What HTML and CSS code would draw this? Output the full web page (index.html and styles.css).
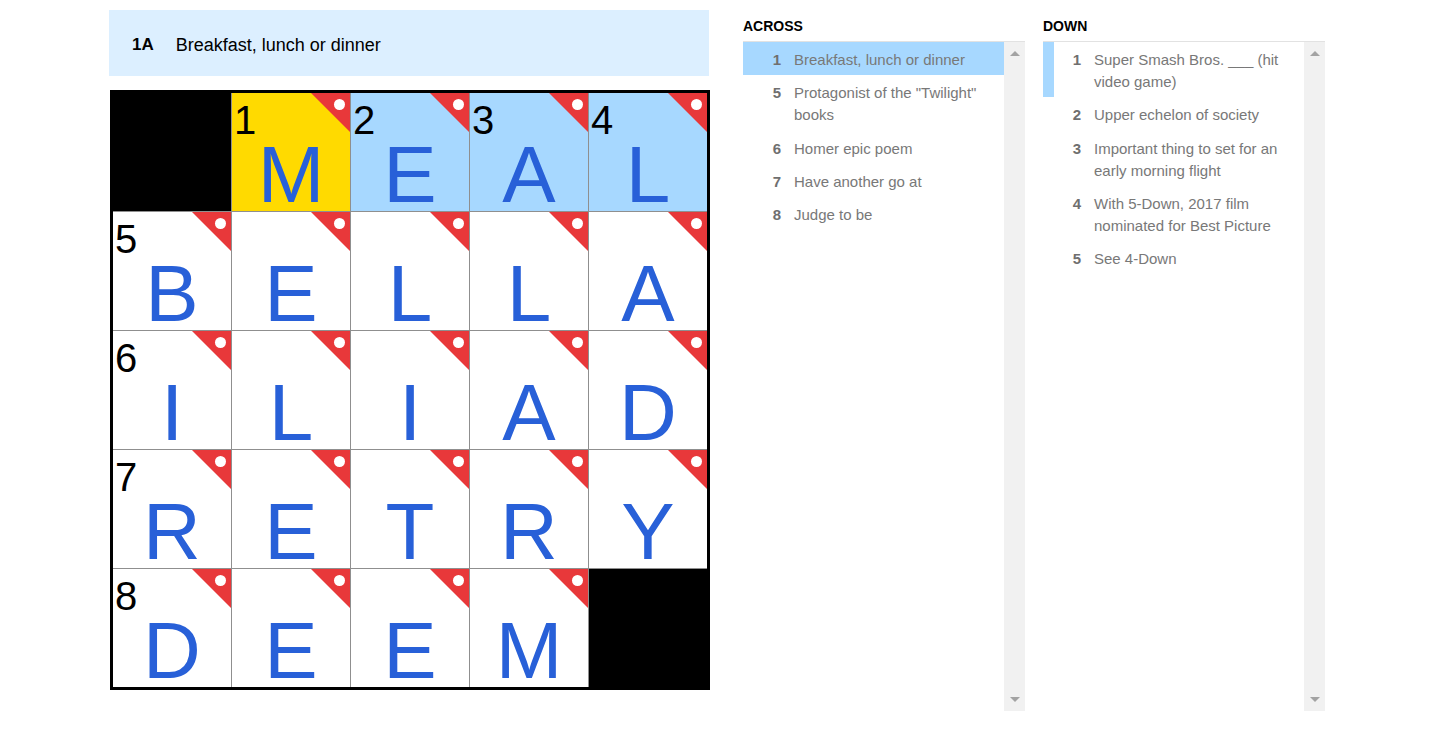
FILE: index.html
```html
<!DOCTYPE html>
<html lang="en">
<head>
<meta charset="utf-8">
<title>Crossword</title>
<link rel="stylesheet" href="styles.css">
</head>
<body>
<div class="page">
  <div class="board">
    <div class="clue-bar"><span class="clue-label">1A</span><span class="clue-text">Breakfast, lunch or dinner</span></div>
    <div class="grid">
      <div class="cell block"></div>
      <div class="cell selected"><span class="num">1</span><span class="letter">M</span><span class="flag"></span></div>
      <div class="cell word"><span class="num">2</span><span class="letter">E</span><span class="flag"></span></div>
      <div class="cell word"><span class="num">3</span><span class="letter">A</span><span class="flag"></span></div>
      <div class="cell word"><span class="num">4</span><span class="letter">L</span><span class="flag"></span></div>

      <div class="cell"><span class="num">5</span><span class="letter">B</span><span class="flag"></span></div>
      <div class="cell"><span class="letter">E</span><span class="flag"></span></div>
      <div class="cell"><span class="letter">L</span><span class="flag"></span></div>
      <div class="cell"><span class="letter">L</span><span class="flag"></span></div>
      <div class="cell"><span class="letter">A</span><span class="flag"></span></div>

      <div class="cell"><span class="num">6</span><span class="letter">I</span><span class="flag"></span></div>
      <div class="cell"><span class="letter">L</span><span class="flag"></span></div>
      <div class="cell"><span class="letter">I</span><span class="flag"></span></div>
      <div class="cell"><span class="letter">A</span><span class="flag"></span></div>
      <div class="cell"><span class="letter">D</span><span class="flag"></span></div>

      <div class="cell"><span class="num">7</span><span class="letter">R</span><span class="flag"></span></div>
      <div class="cell"><span class="letter">E</span><span class="flag"></span></div>
      <div class="cell"><span class="letter">T</span><span class="flag"></span></div>
      <div class="cell"><span class="letter">R</span><span class="flag"></span></div>
      <div class="cell"><span class="letter">Y</span><span class="flag"></span></div>

      <div class="cell"><span class="num">8</span><span class="letter">D</span><span class="flag"></span></div>
      <div class="cell"><span class="letter">E</span><span class="flag"></span></div>
      <div class="cell"><span class="letter">E</span><span class="flag"></span></div>
      <div class="cell"><span class="letter">M</span><span class="flag"></span></div>
      <div class="cell block"></div>
    </div>
  </div>

  <div class="clues">
    <section class="clue-col">
      <h2 class="clue-head">ACROSS</h2>
      <div class="clue-box">
        <ol class="clue-list">
          <li class="clue-item active"><span class="clue-num">1</span><span class="clue-body">Breakfast, lunch or dinner</span></li>
          <li class="clue-item"><span class="clue-num">5</span><span class="clue-body">Protagonist of the "Twilight" books</span></li>
          <li class="clue-item"><span class="clue-num">6</span><span class="clue-body">Homer epic poem</span></li>
          <li class="clue-item"><span class="clue-num">7</span><span class="clue-body">Have another go at</span></li>
          <li class="clue-item"><span class="clue-num">8</span><span class="clue-body">Judge to be</span></li>
        </ol>
        <div class="scrollbar"><span class="arrow-up"></span><span class="arrow-down"></span></div>
      </div>
    </section>
    <section class="clue-col">
      <h2 class="clue-head">DOWN</h2>
      <div class="clue-box">
        <ol class="clue-list">
          <li class="clue-item related"><span class="clue-num">1</span><span class="clue-body">Super Smash Bros. ___ (hit video game)</span></li>
          <li class="clue-item"><span class="clue-num">2</span><span class="clue-body">Upper echelon of society</span></li>
          <li class="clue-item"><span class="clue-num">3</span><span class="clue-body">Important thing to set for an early morning flight</span></li>
          <li class="clue-item"><span class="clue-num">4</span><span class="clue-body">With 5-Down, 2017 film nominated for Best Picture</span></li>
          <li class="clue-item"><span class="clue-num">5</span><span class="clue-body">See 4-Down</span></li>
        </ol>
        <div class="scrollbar"><span class="arrow-up"></span><span class="arrow-down"></span></div>
      </div>
    </section>
  </div>
</div>
</body>
</html>
```

FILE: styles.css
```css
* { box-sizing: border-box; }

body {
  margin: 0;
  background: #fff;
  font-family: "Liberation Sans", Arial, sans-serif;
  color: #000;
}

.page {
  display: flex;
  align-items: flex-start;
  gap: 33px;
  padding: 10px 0 0 109px;
}

.board {
  width: 601px;
  display: flex;
  flex-direction: column;
}

.clue-bar {
  width: 600px;
  height: 66px;
  background: #dcefff;
  display: flex;
  align-items: center;
  padding: 4px 0 0 23px;
  font-size: 18px;
}

.clue-label {
  font-weight: bold;
  font-size: 17px;
  margin-right: 22px;
}

.grid {
  margin: 14px 0 0 1px;
  width: 600px;
  height: 600px;
  border: 3px solid #000;
  background: #8f8f8f;
  display: grid;
  grid-template-columns: repeat(5, 1fr);
  grid-template-rows: repeat(5, 1fr);
  gap: 1px;
}

.cell {
  position: relative;
  background: #fff;
}

.cell.block { background: #000; }
.cell.selected { background: #ffda00; }
.cell.word { background: #a7d8ff; }

.num {
  position: absolute;
  left: 2px;
  top: 7px;
  font-size: 40px;
  line-height: 40px;
  color: #000;
}

.letter {
  display: block;
  margin-top: 52px;
  font-size: 80px;
  line-height: 60px;
  text-align: center;
  color: #2860d8;
}

.flag {
  position: absolute;
  top: 0;
  right: 0;
  width: 39px;
  height: 39px;
  background: #e8383a;
  clip-path: polygon(0 0, 100% 0, 100% 100%);
}

.flag::after {
  content: "";
  position: absolute;
  top: 6px;
  right: 5px;
  width: 11px;
  height: 11px;
  border-radius: 50%;
  background: #fff;
}

.clues {
  display: flex;
  gap: 18px;
}

.clue-col {
  width: 282px;
}

.clue-head {
  margin: 6px 0 5px;
  font-size: 14px;
  line-height: 20px;
  font-weight: bold;
  color: #000;
}

.clue-box {
  display: flex;
  height: 670px;
  border-top: 1px solid #e2e2e2;
}

.clue-list {
  list-style: none;
  margin: 0;
  padding: 0;
  width: 261px;
}

.clue-item {
  display: flex;
  padding: 7px 15px 4.25px 13px;
  font-size: 15px;
  line-height: 22px;
}

.clue-item.active { background: #a7d8ff; }
.clue-item.related { box-shadow: inset 11px 0 0 #a7d8ff; }

.clue-num {
  width: 25px;
  flex: none;
  text-align: right;
  font-weight: bold;
  color: #6f6f6f;
  margin-right: 13px;
}

.clue-body {
  color: #787878;
}

.scrollbar {
  width: 21px;
  background: #f1f1f1;
  display: flex;
  flex-direction: column;
  justify-content: space-between;
  align-items: center;
  padding: 9px 0;
}

.arrow-up {
  width: 0;
  height: 0;
  border-left: 5px solid transparent;
  border-right: 5px solid transparent;
  border-bottom: 5px solid #a3a3a3;
}

.arrow-down {
  width: 0;
  height: 0;
  border-left: 5px solid transparent;
  border-right: 5px solid transparent;
  border-top: 5px solid #a3a3a3;
}
```
